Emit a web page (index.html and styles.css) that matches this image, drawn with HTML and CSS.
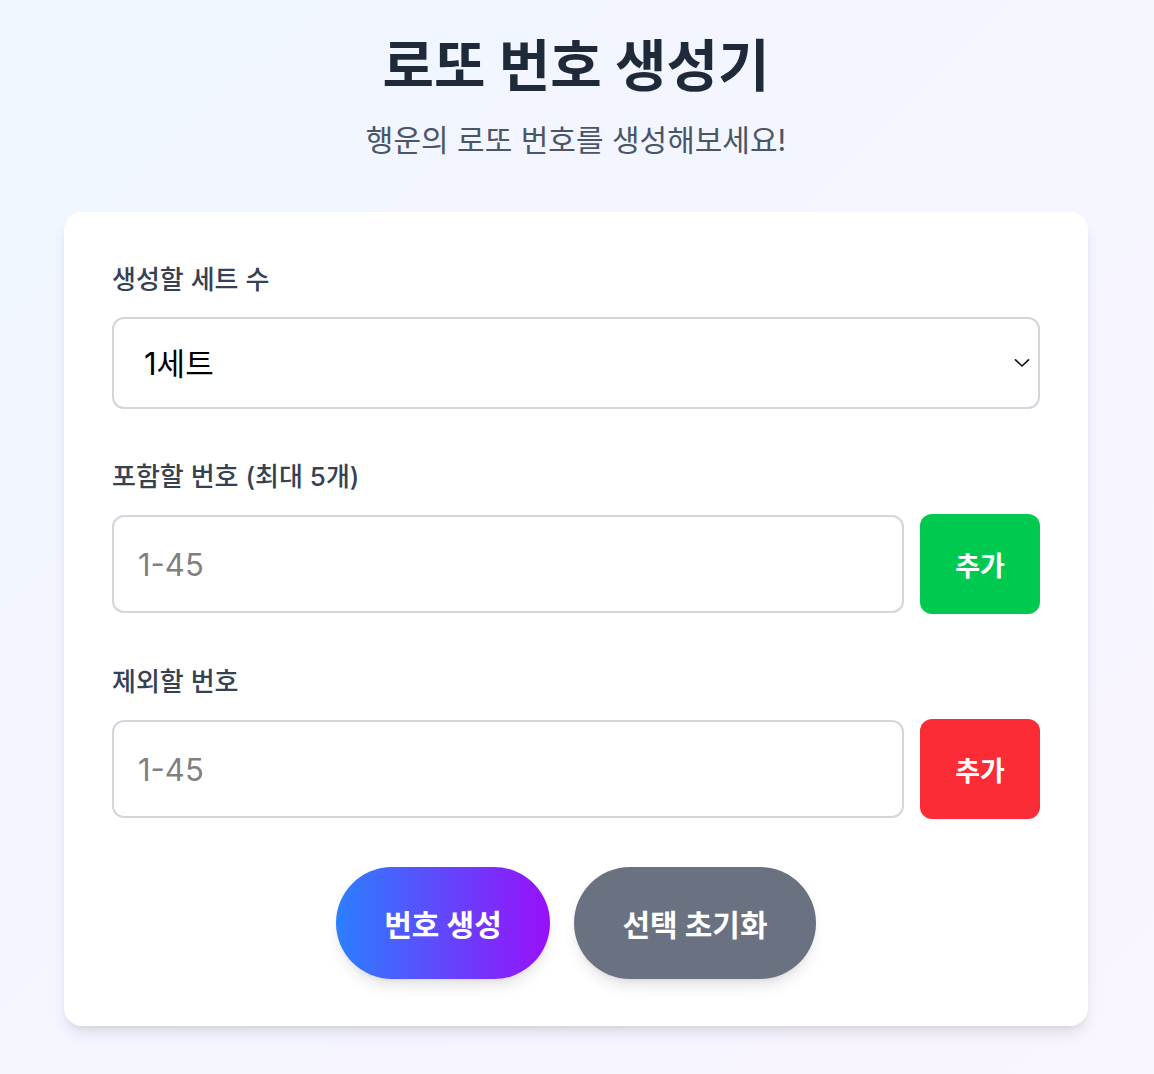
FILE: index.html
```html
<!DOCTYPE html>
<html lang="ko">
<head>
<meta charset="utf-8">
<title>로또 번호 생성기</title>
<link rel="stylesheet" href="styles.css">
</head>
<body>
<div class="page">
  <header class="header">
    <h1 class="title">로또 번호 생성기</h1>
    <p class="subtitle">행운의 로또 번호를 생성해보세요!</p>
  </header>
  <main class="card">
    <section class="field">
      <label class="label">생성할 세트 수</label>
      <div class="select-wrap">
        <select class="select">
          <option>1세트</option>
          <option>2세트</option>
          <option>3세트</option>
          <option>4세트</option>
          <option>5세트</option>
        </select>
        <svg class="chevron" width="16" height="10" viewBox="0 0 16 10" aria-hidden="true"><path d="M1.5 1.8 L8 8 L14.5 1.8" fill="none" stroke="#111" stroke-width="1.6" stroke-linecap="round" stroke-linejoin="round"/></svg>
      </div>
    </section>
    <section class="field">
      <label class="label">포함할 번호 (최대 5개)</label>
      <div class="row">
        <input class="input" type="text" placeholder="1-45">
        <button class="add add-green">추가</button>
      </div>
    </section>
    <section class="field">
      <label class="label">제외할 번호</label>
      <div class="row">
        <input class="input" type="text" placeholder="1-45">
        <button class="add add-red">추가</button>
      </div>
    </section>
    <div class="actions">
      <button class="pill pill-gradient">번호 생성</button>
      <button class="pill pill-gray">선택 초기화</button>
    </div>
  </main>
</div>
</body>
</html>
```
FILE: styles.css
```css
* { box-sizing: border-box; }
html, body { margin: 0; padding: 0; }
body {
  min-height: 1074px;
  background: linear-gradient(135deg, #eff6ff 0%, #faf5ff 100%);
  font-family: "Inter", "Noto Sans CJK KR", "Noto Sans", sans-serif;
  color: #1e2939;
}
.page {
  width: 1024px;
  margin: 0 0 0 64px;
  padding-top: 34px;
  padding-bottom: 48px;
}
.header {
  text-align: center;
}
.title {
  margin: 0;
  font-size: 56px;
  line-height: 64px;
  font-weight: 700;
  color: #1e2939;
}
.subtitle {
  margin: 24px 0 0;
  font-size: 30px;
  line-height: 36px;
  color: #4a5565;
}
.card {
  margin-top: 54px;
  background: #fff;
  border-radius: 18px;
  padding: 48px 48px 47px;
  box-shadow: 0 10px 15px -3px rgba(0,0,0,0.1), 0 4px 6px -4px rgba(0,0,0,0.1);
  display: flex;
  flex-direction: column;
  gap: 48px;
}
.field {
  display: flex;
  flex-direction: column;
}
.label {
  font-size: 26px;
  line-height: 40px;
  font-weight: 500;
  color: #364153;
  margin-bottom: 17px;
}
.select-wrap {
  position: relative;
}
.select {
  width: 100%;
  height: 92px;
  appearance: none;
  -webkit-appearance: none;
  border: 2px solid #d1d5dc;
  border-radius: 12px;
  background: #fff;
  padding: 0 30px;
  font-family: inherit;
  font-size: 31px;
  color: #000;
  outline: none;
  display: block;
}
.chevron {
  position: absolute;
  right: 10px;
  top: 41px;
  pointer-events: none;
}
.row {
  display: flex;
  align-items: center;
  gap: 16px;
}
.input {
  flex: 1;
  height: 98px;
  border: 2px solid #d1d5dc;
  border-radius: 12px;
  padding: 0 24px;
  font-family: inherit;
  font-size: 31px;
  color: #111;
  outline: none;
}
.input::placeholder {
  color: #808080;
}
.add {
  width: 120px;
  height: 100px;
  border: none;
  border-radius: 12px;
  color: #fff;
  font-family: inherit;
  font-size: 27px;
  font-weight: 600;
}
.add-green { background: #00c950; }
.add-red { background: #fb2c36; }
.actions {
  display: flex;
  justify-content: center;
  gap: 24px;
}
.pill {
  height: 112px;
  border: none;
  border-radius: 56px;
  color: #fff;
  font-family: inherit;
  font-size: 30px;
  font-weight: 700;
  box-shadow: 0 10px 15px -3px rgba(0,0,0,0.1), 0 4px 6px -4px rgba(0,0,0,0.1);
}
.pill-gradient {
  width: 214px;
  background: linear-gradient(90deg, #2b7fff 0%, #9810fa 100%);
}
.pill-gray {
  width: 242px;
  background: #6a7282;
}
```
